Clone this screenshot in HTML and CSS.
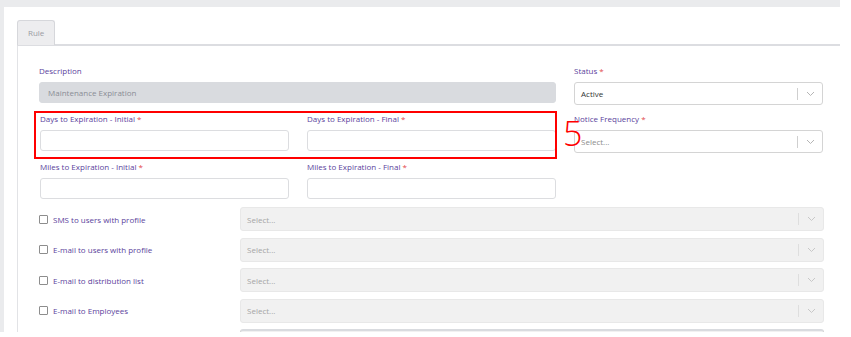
FILE: index.html
```
<!DOCTYPE html>
<html lang="en">
<head>
  <meta charset="UTF-8">
  <meta name="viewport" content="width=device-width, initial-scale=1.0">
  <title>Rule</title>
  <link rel="stylesheet" href="styles.css">
</head>
<body>

<div id="screen">
  <div id="card">

    <!-- Tabs -->
    <div class="tab-bar">
      <div class="tab active">Rule</div>
    </div>

    <!-- Rule form -->
    <div class="tab-panel">
      <div class="form-grid">
        <div class="field span-2">
          <label>Description</label>
          <div class="input disabled">Maintenance Expiration</div>
        </div>
        <div class="field">
          <label>Status <span class="req">*</span></label>
          <div class="select">
            <span class="value">Active</span>
            <span class="sep"></span>
            <svg class="chevron" width="9" height="6" viewBox="0 0 9 6"><polyline points="1,1 4.5,4.5 8,1" fill="none" stroke="#b5b5b5" stroke-width="1"/></svg>
          </div>
        </div>

        <div class="field">
          <label>Days to Expiration - Initial <span class="req">*</span></label>
          <div class="input"></div>
        </div>
        <div class="field">
          <label>Days to Expiration - Final <span class="req">*</span></label>
          <div class="input"></div>
        </div>
        <div class="field">
          <label>Notice Frequency <span class="req">*</span></label>
          <div class="select">
            <span class="value placeholder">Select...</span>
            <span class="sep"></span>
            <svg class="chevron" width="9" height="6" viewBox="0 0 9 6"><polyline points="1,1 4.5,4.5 8,1" fill="none" stroke="#b5b5b5" stroke-width="1"/></svg>
          </div>
        </div>

        <div class="field">
          <label>Miles to Expiration - Initial <span class="req">*</span></label>
          <div class="input"></div>
        </div>
        <div class="field">
          <label>Miles to Expiration - Final <span class="req">*</span></label>
          <div class="input"></div>
        </div>
      </div>

      <!-- Notifications -->
      <div class="notify-list">
        <div class="notify-row">
          <label class="check"><span class="box"></span>SMS to users with profile</label>
          <div class="select disabled">
            <span class="value placeholder">Select...</span>
            <span class="sep"></span>
            <svg class="chevron" width="9" height="6" viewBox="0 0 9 6"><polyline points="1,1 4.5,4.5 8,1" fill="none" stroke="#c8c8c8" stroke-width="1"/></svg>
          </div>
        </div>
        <div class="notify-row">
          <label class="check"><span class="box"></span>E-mail to users with profile</label>
          <div class="select disabled">
            <span class="value placeholder">Select...</span>
            <span class="sep"></span>
            <svg class="chevron" width="9" height="6" viewBox="0 0 9 6"><polyline points="1,1 4.5,4.5 8,1" fill="none" stroke="#c8c8c8" stroke-width="1"/></svg>
          </div>
        </div>
        <div class="notify-row">
          <label class="check"><span class="box"></span>E-mail to distribution list</label>
          <div class="select disabled">
            <span class="value placeholder">Select...</span>
            <span class="sep"></span>
            <svg class="chevron" width="9" height="6" viewBox="0 0 9 6"><polyline points="1,1 4.5,4.5 8,1" fill="none" stroke="#c8c8c8" stroke-width="1"/></svg>
          </div>
        </div>
        <div class="notify-row">
          <label class="check"><span class="box"></span>E-mail to Employees</label>
          <div class="select disabled">
            <span class="value placeholder">Select...</span>
            <span class="sep"></span>
            <svg class="chevron" width="9" height="6" viewBox="0 0 9 6"><polyline points="1,1 4.5,4.5 8,1" fill="none" stroke="#c8c8c8" stroke-width="1"/></svg>
          </div>
        </div>
        <div class="notify-row">
          <span></span>
          <div class="select cut"></div>
        </div>
      </div>
    </div>

    <!-- Annotation overlay -->
    <div class="highlight"></div>
    <div class="marker">5</div>

  </div>
</div>

</body>
</html>
```

FILE: styles.css
```
body {
  margin: 0;
  padding: 0;
  background-color: #fff;
  font-family: "Open Sans", Arial, sans-serif;
  font-size: 8px;
}

#screen {
  width: 840px;
  height: 332px;
  padding: 7px 0 0 4px;
  box-sizing: border-box;
  background-color: #eaebed;
  overflow: hidden;
}

#card {
  position: relative;
  height: 100%;
  background-color: #fff;
  padding: 13px 0 0 13px;
  box-sizing: border-box;
}

.tab-bar {
  display: flex;
  border-bottom: 2px solid #dcdde1;
}

.tab {
  width: 38px;
  height: 25px;
  line-height: 23px;
  margin-bottom: -1px;
  box-sizing: border-box;
  padding-left: 10px;
  background-color: #ededef;
  border: 1px solid #d6d7db;
  border-bottom: none;
  border-radius: 3px 3px 0 0;
  color: #9a9ba3;
}

.tab-panel {
  border-left: 1px solid #e2e3e6;
  padding: 19px 0 0 21px;
  height: 300px;
}

.form-grid {
  display: grid;
  grid-template-columns: 250px 249px 249px;
  grid-auto-rows: 40px;
  column-gap: 18px;
  row-gap: 8px;
  align-items: start;
}

.form-grid .field:nth-child(3n) {
  margin-left: 1px;
}

.span-2 {
  grid-column: span 2;
}

.field label {
  display: block;
  height: 12px;
  line-height: 12px;
  margin-bottom: 5px;
  color: #5b3f9c;
}

.req {
  color: #e2474b;
}

.input {
  height: 21px;
  line-height: 19px;
  box-sizing: border-box;
  border: 1px solid #dcdde0;
  border-radius: 3px;
  background-color: #fff;
  padding-left: 8px;
}

.input.disabled {
  background-color: #d9dbdf;
  border-color: #d9dbdf;
  color: #8a8d95;
}

.select {
  display: flex;
  align-items: center;
  height: 23px;
  box-sizing: border-box;
  border: 1px solid #d4d4d4;
  border-radius: 3px;
  background-color: #fff;
  padding-left: 6px;
}

.select .value {
  flex-grow: 1;
  color: #333;
}

.select .placeholder {
  color: #8c8c8c;
}

.sep {
  width: 1px;
  height: 12px;
  background-color: #cfcfcf;
}

.chevron {
  margin: 0 7px 0 8px;
}

.select.disabled {
  background-color: #f1f1f1;
  border-color: #e8e8e8;
}

.select.disabled .placeholder {
  color: #a5a5a5;
}

.select.disabled .sep {
  background-color: #dedede;
}

.select.cut {
  background-color: #f1f1f1;
  border-top: 2px solid #d9dbdf;
}

.notify-list {
  display: flex;
  flex-direction: column;
  gap: 6.5px;
  margin-top: 6px;
}

.notify-row {
  display: grid;
  grid-template-columns: 201px 584px;
  align-items: center;
}

.notify-row .select {
  height: 24px;
}

.check {
  display: flex;
  align-items: center;
  color: #5b3f9c;
}

.box {
  width: 7px;
  height: 7px;
  border: 1px solid #8d8d8d;
  border-radius: 1px;
  margin-right: 5px;
}

.highlight {
  position: absolute;
  left: 30px;
  top: 104px;
  width: 523px;
  height: 48px;
  box-sizing: border-box;
  border: 2px solid #f00;
}

.marker {
  position: absolute;
  left: 559px;
  top: 109px;
  font-family: "Open Sans", sans-serif;
  font-size: 34px;
  line-height: 34px;
  font-weight: 300;
  color: #f00;
}
```
